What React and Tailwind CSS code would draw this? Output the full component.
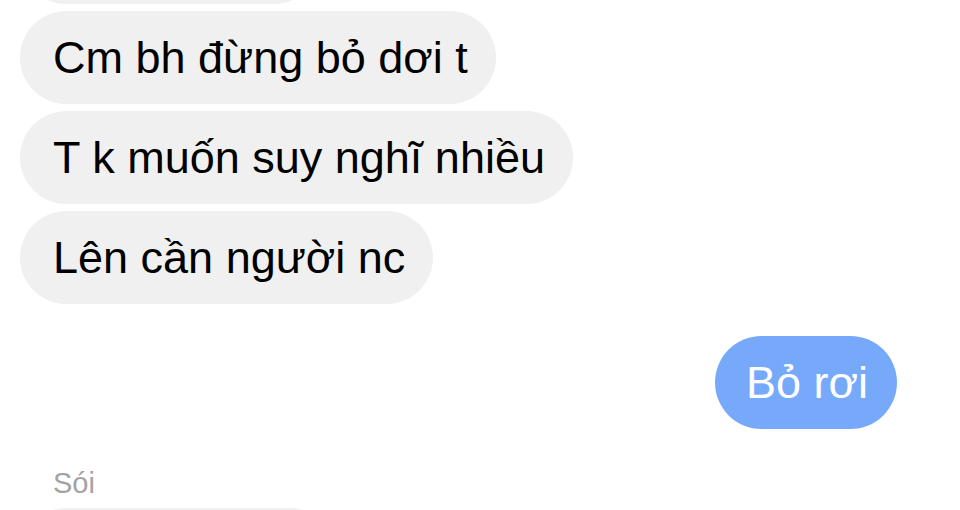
export default function App() {
  const font = { fontFamily: '"Liberation Sans", Arial, sans-serif' };
  const gray = "h-[93px] flex items-center rounded-full bg-[#f0f0f0] pl-[33px] pr-[28px] text-[45px] text-black leading-none whitespace-nowrap";
  return (
    <div className="w-[960px] h-[510px] overflow-hidden bg-white" style={font}>
      <div className="flex flex-col items-start pl-[20px] mt-[-89px] gap-[7px]">
        <div className="h-[93px] w-[300px] rounded-full bg-[#f0f0f0]" />
        <div className={gray}>Cm bh đừng bỏ dơi t</div>
        <div className={gray}>T k muốn suy nghĩ nhiều</div>
        <div className={gray}>Lên cần người nc</div>
        <div className="self-end mr-[63px] mt-[25px] h-[93px] flex items-center rounded-full bg-[#77a9fb] pl-[31px] pr-[29px] text-[45px] text-white leading-none whitespace-nowrap">
          Bỏ rơi
        </div>
        <div className="mt-[29px] pl-[33px] h-[36px] leading-[36px] text-[29px] text-[#a3a3a3]">Sói</div>
        <div className="h-[93px] w-[316px] rounded-full bg-[#f0f0f0]" />
      </div>
    </div>
  );
}
